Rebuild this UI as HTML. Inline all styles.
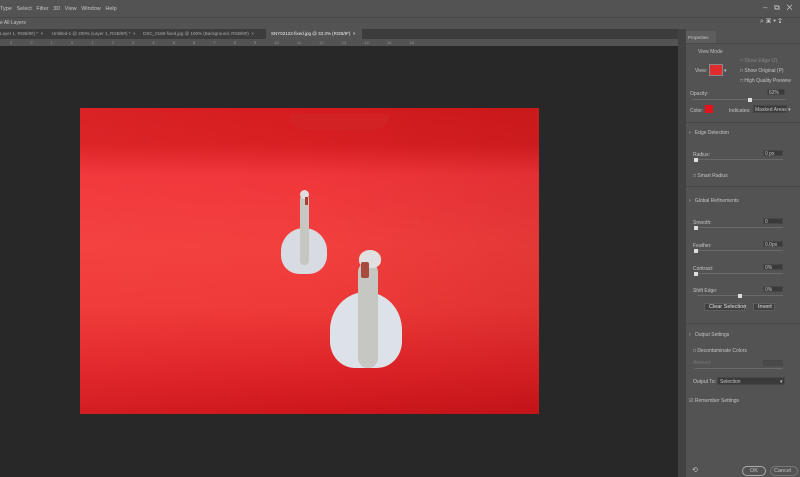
<!DOCTYPE html>
<html><head><style>
*{margin:0;padding:0;box-sizing:border-box}
body{width:800px;height:477px;overflow:hidden;background:#282828;font-family:"Liberation Sans",sans-serif;position:relative;color:#ccc}
.a{position:absolute}
.t{position:absolute;font-size:5px;color:#c4c4c4;white-space:nowrap}
.field{position:absolute;background:#3a3a3a;border:1px solid #474747;height:6px}
.slider{position:absolute;height:1px;background:#6a6a6a}
.thumb{position:absolute;width:4px;height:4px;background:#ddd}
</style></head><body>
<div class="a" style="left:0;top:0;width:800px;height:17px;background:#535353"></div>
<div class="t" style="left:0;top:6px;font-size:5.5px">Type&nbsp;&nbsp; Select&nbsp;&nbsp; Filter&nbsp;&nbsp; 3D&nbsp;&nbsp; View&nbsp;&nbsp; Window&nbsp;&nbsp; Help</div>
<div class="t" style="left:763px;top:3px;font-size:8px">–&nbsp;&nbsp;&nbsp;⧉&nbsp;&nbsp;&nbsp;✕</div>
<div class="a" style="left:0;top:17px;width:800px;height:12px;background:#535353;border-top:1px solid #474747"></div>
<div class="t" style="left:0;top:20px">e All Layers</div>
<div class="t" style="left:760px;top:18px;font-size:7px">⌕ ▣ ▾ ⇪</div>
<div class="a" style="left:0;top:29px;width:678px;height:10px;background:#3c3c3c"></div>
<div class="t" style="left:0;top:31px;font-size:4.5px;color:#aaa">Layer 1, RGB/8#) *&nbsp;&nbsp;×&nbsp;&nbsp;&nbsp;&nbsp;&nbsp;&nbsp;&nbsp;Untitled-1 @ 200% (Layer 1, RGB/8#) *&nbsp;&nbsp;×&nbsp;&nbsp;&nbsp;&nbsp;&nbsp;&nbsp;DSC_0168-fixed.jpg @ 100% (Background, RGB/8#)&nbsp;&nbsp;×</div>
<div class="a" style="left:266px;top:29px;width:96px;height:10px;background:#535353"></div>
<div class="t" style="left:271px;top:31px;font-size:4.5px;color:#eee">SNY02122-fixed.jpg @ 33.3% (RGB/8*)&nbsp;&nbsp;×</div>
<div class="a" style="left:0;top:39px;width:678px;height:7px;background:#535353"></div>
<div class="t" style="left:10px;top:40px;font-size:4px;color:#999;word-spacing:17px">3 2 1 0 1 2 3 4 5 6 7 8 9 10 11 12 13 14 15 16</div>
<div class="a" style="left:80px;top:108px;width:459px;height:306px;background:linear-gradient(180deg,#d41c1e 0%,#d81f22 12%,#f0363a 22%,#f2403e 45%,#ee3a38 65%,#df2428 85%,#cc161c 100%)"></div>
<div class="a" style="left:80px;top:108px;width:459px;height:306px;background:linear-gradient(90deg,rgba(255,80,80,.12),rgba(0,0,0,0) 50%,rgba(120,0,0,.12))"></div>
<div class="a" style="left:290px;top:114px;width:100px;height:16px;border-radius:0 0 30px 30px;background:rgba(210,40,40,.5)"></div>
<!-- swan 1 -->
<div class="a" style="left:281px;top:228px;width:46px;height:46px;border-radius:50% 50% 40% 40%;background:#d8dce2"></div>
<div class="a" style="left:300px;top:195px;width:9px;height:70px;border-radius:4px;background:#c6c6c2"></div>
<div class="a" style="left:300px;top:190px;width:9px;height:9px;border-radius:50%;background:#ddd"></div>
<div class="a" style="left:305px;top:197px;width:3px;height:8px;background:#a84030"></div>
<!-- swan 2 -->
<div class="a" style="left:330px;top:292px;width:72px;height:76px;border-radius:50% 50% 35% 35%;background:#dde2e8"></div>
<div class="a" style="left:358px;top:262px;width:20px;height:106px;border-radius:10px;background:#c6c6c2"></div>
<div class="a" style="left:359px;top:250px;width:22px;height:18px;border-radius:50% 50% 40% 40%;background:#e0e0e0"></div>
<div class="a" style="left:361px;top:262px;width:8px;height:16px;border-radius:2px;background:#a84a3e"></div>
<!-- right panel -->
<div class="a" style="left:678px;top:29px;width:122px;height:448px;background:#424242"></div>
<div class="a" style="left:686px;top:29px;width:114px;height:448px;background:#535353"></div>
<div class="a" style="left:686px;top:31px;width:30px;height:12px;background:#5d5d5d"></div>
<div class="t" style="left:688px;top:35px;font-size:4.5px">Properties</div>
<div class="a" style="left:686px;top:43px;width:114px;height:1px;background:#474747"></div>
<div class="t" style="left:698px;top:49px">View Mode</div>
<div class="t" style="left:695px;top:68px">View:</div>
<div class="a" style="left:709px;top:64px;width:14px;height:12px;background:#e02b2f;border:1px solid #888"></div>
<div class="t" style="left:724px;top:68px">▾</div>
<div class="t" style="left:740px;top:58px;color:#888">□ Show Edge (J)</div>
<div class="t" style="left:740px;top:68px">□ Show Original (P)</div>
<div class="t" style="left:740px;top:78px">□ High Quality Preview</div>
<div class="t" style="left:690px;top:91px">Opacity:</div>
<div class="field" style="left:767px;top:89px;width:18px"></div><div class="t" style="left:769px;top:90px">62%</div>
<div class="slider" style="left:692px;top:99px;width:94px"></div><div class="thumb" style="left:748px;top:98px"></div>
<div class="t" style="left:690px;top:108px">Color:</div>
<div class="a" style="left:705px;top:105px;width:8px;height:8px;background:#e8101a"></div>
<div class="t" style="left:729px;top:108px">Indicates:</div>
<div class="field" style="left:753px;top:105px;width:34px;height:8px"></div><div class="t" style="left:755px;top:107px">Masked Areas ▾</div>
<div class="a" style="left:686px;top:122px;width:114px;height:1px;background:#474747"></div>
<div class="t" style="left:689px;top:130px">›&nbsp;&nbsp;&nbsp;Edge Detection</div>
<div class="t" style="left:693px;top:152px">Radius:</div>
<div class="field" style="left:763px;top:150px;width:20px"></div><div class="t" style="left:765px;top:151px">0 px</div>
<div class="slider" style="left:695px;top:159px;width:88px"></div><div class="thumb" style="left:694px;top:158px"></div>
<div class="t" style="left:693px;top:173px">□ Smart Radius</div>
<div class="a" style="left:686px;top:186px;width:114px;height:1px;background:#474747"></div>
<div class="t" style="left:689px;top:198px">›&nbsp;&nbsp;&nbsp;Global Refinements</div>
<div class="t" style="left:693px;top:220px">Smooth:</div>
<div class="field" style="left:763px;top:218px;width:20px"></div><div class="t" style="left:765px;top:219px">0</div>
<div class="slider" style="left:695px;top:227px;width:88px"></div><div class="thumb" style="left:694px;top:226px"></div>
<div class="t" style="left:693px;top:243px">Feather:</div>
<div class="field" style="left:763px;top:241px;width:20px"></div><div class="t" style="left:765px;top:242px">0.0px</div>
<div class="slider" style="left:695px;top:250px;width:88px"></div><div class="thumb" style="left:694px;top:249px"></div>
<div class="t" style="left:693px;top:266px">Contrast:</div>
<div class="field" style="left:763px;top:264px;width:20px"></div><div class="t" style="left:765px;top:265px">0%</div>
<div class="slider" style="left:695px;top:273px;width:88px"></div><div class="thumb" style="left:694px;top:272px"></div>
<div class="t" style="left:693px;top:288px">Shift Edge:</div>
<div class="field" style="left:763px;top:286px;width:20px"></div><div class="t" style="left:765px;top:287px">0%</div>
<div class="slider" style="left:697px;top:295px;width:86px"></div><div class="thumb" style="left:738px;top:294px"></div>
<div class="a" style="left:704px;top:303px;width:41px;height:8px;background:#424242;border:1px solid #5e5e5e"></div>
<div class="t" style="left:709px;top:304px;font-size:5.5px;color:#e0e0e0">Clear Selection</div>
<div class="a" style="left:753px;top:303px;width:22px;height:8px;background:#424242;border:1px solid #5e5e5e"></div>
<div class="t" style="left:758px;top:304px;font-size:5.5px;color:#e0e0e0">Invert</div>
<div class="a" style="left:686px;top:323px;width:114px;height:1px;background:#474747"></div>
<div class="t" style="left:689px;top:332px">›&nbsp;&nbsp;&nbsp;Output Settings</div>
<div class="t" style="left:693px;top:348px">□ Decontaminate Colors</div>
<div class="t" style="left:693px;top:360px;color:#777">Amount:</div>
<div class="field" style="left:763px;top:360px;width:20px;background:#4a4a4a"></div>
<div class="slider" style="left:695px;top:368px;width:88px"></div>
<div class="t" style="left:693px;top:379px">Output To:</div>
<div class="field" style="left:717px;top:377px;width:68px;height:8px"></div><div class="t" style="left:720px;top:379px">Selection</div><div class="t" style="left:780px;top:379px">▾</div>
<div class="t" style="left:689px;top:398px">☑ Remember Settings</div>
<div class="t" style="left:692px;top:466px;font-size:7px">⟲</div>
<div class="a" style="left:742px;top:466px;width:24px;height:10px;border:1px solid #aaa;border-radius:6px"></div>
<div class="t" style="left:750px;top:468px;font-size:5.5px">OK</div>
<div class="a" style="left:770px;top:466px;width:28px;height:10px;border:1px solid #777;border-radius:6px"></div>
<div class="t" style="left:774px;top:468px;font-size:5.5px">Cancel</div>
</body></html>
